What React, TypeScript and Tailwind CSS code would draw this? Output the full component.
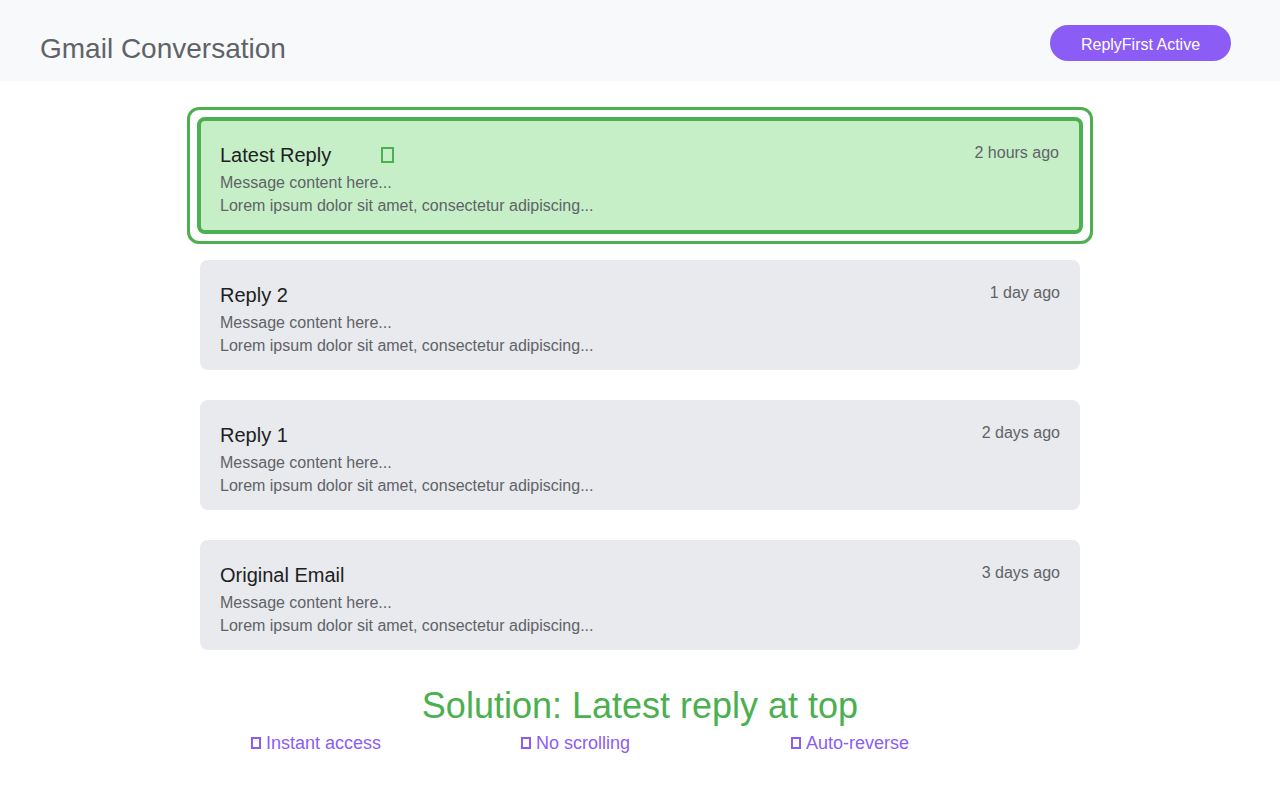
const replies = [
  { title: "Reply 2", time: "1 day ago" },
  { title: "Reply 1", time: "2 days ago" },
  { title: "Original Email", time: "3 days ago" },
];

const perks = ["Instant access", "No scrolling", "Auto-reverse"];

function CardBody({ title, time, badge }: { title: string; time: string; badge?: boolean }) {
  return (
    <>
      <div className="flex items-start justify-between">
        <div className="flex items-start">
          <h3 className="text-[20px] leading-[24px] text-[#202124]">{title}</h3>
          {badge && (
            <span className="ml-[50px] mt-[4px] inline-block h-[16px] w-[13px] border-2 border-[#4caf50]" />
          )}
        </div>
        <span className="text-[16px] leading-[20px] text-[#5f6368]">{time}</span>
      </div>
      <p className="mt-[4px] text-[16px] leading-[23px] text-[#5f6368]">Message content here...</p>
      <p className="text-[16px] leading-[23px] text-[#5f6368]">
        Lorem ipsum dolor sit amet, consectetur adipiscing...
      </p>
    </>
  );
}

export default function App() {
  return (
    <div className="min-h-[800px] bg-white font-['Liberation_Sans',Arial,sans-serif]">
      {/* header */}
      <header className="flex h-[81px] justify-between bg-[#f8f9fa] pl-10 pr-[49px]">
        <h1 className="pt-[33px] text-[28px] leading-[32px] text-[#5f6368]">Gmail Conversation</h1>
        <button className="mt-[25px] h-[36px] w-[181px] rounded-full bg-[#8b5cf6] pt-[3px] text-[16px] text-white">
          ReplyFirst Active
        </button>
      </header>

      <main className="mx-auto w-[880px] pt-[26px]">
        {/* highlighted latest reply */}
        <div className="-mx-[13px] rounded-xl border-[3px] border-[#4caf50] bg-white p-[7px]">
          <div className="h-[117px] rounded-lg border-4 border-[#4caf50] bg-[#c6efc7] pl-[19px] pr-[20px] pt-[22px]">
            <CardBody title="Latest Reply" time="2 hours ago" badge />
          </div>
        </div>

        <div className="mt-[16px] flex flex-col gap-[30px]">
          {replies.map((r) => (
            <div key={r.title} className="h-[110px] rounded-lg bg-[#e8eaed] px-5 pt-[23px]">
              <CardBody title={r.title} time={r.time} />
            </div>
          ))}
        </div>
      </main>

      {/* solution summary */}
      <section className="pt-[36px]">
        <h2 className="text-center text-[36px] leading-[40px] text-[#4caf50]">Solution: Latest reply at top</h2>
        <ul className="mt-[6px] flex pl-[251px]">
          {perks.map((p) => (
            <li key={p} className="flex w-[270px] items-center text-[18px] leading-[22px] text-[#8b5cf6]">
              <span className="mr-[5px] inline-block h-[12px] w-[10px] border-2 border-[#8b5cf6]" />
              {p}
            </li>
          ))}
        </ul>
      </section>
    </div>
  );
}
